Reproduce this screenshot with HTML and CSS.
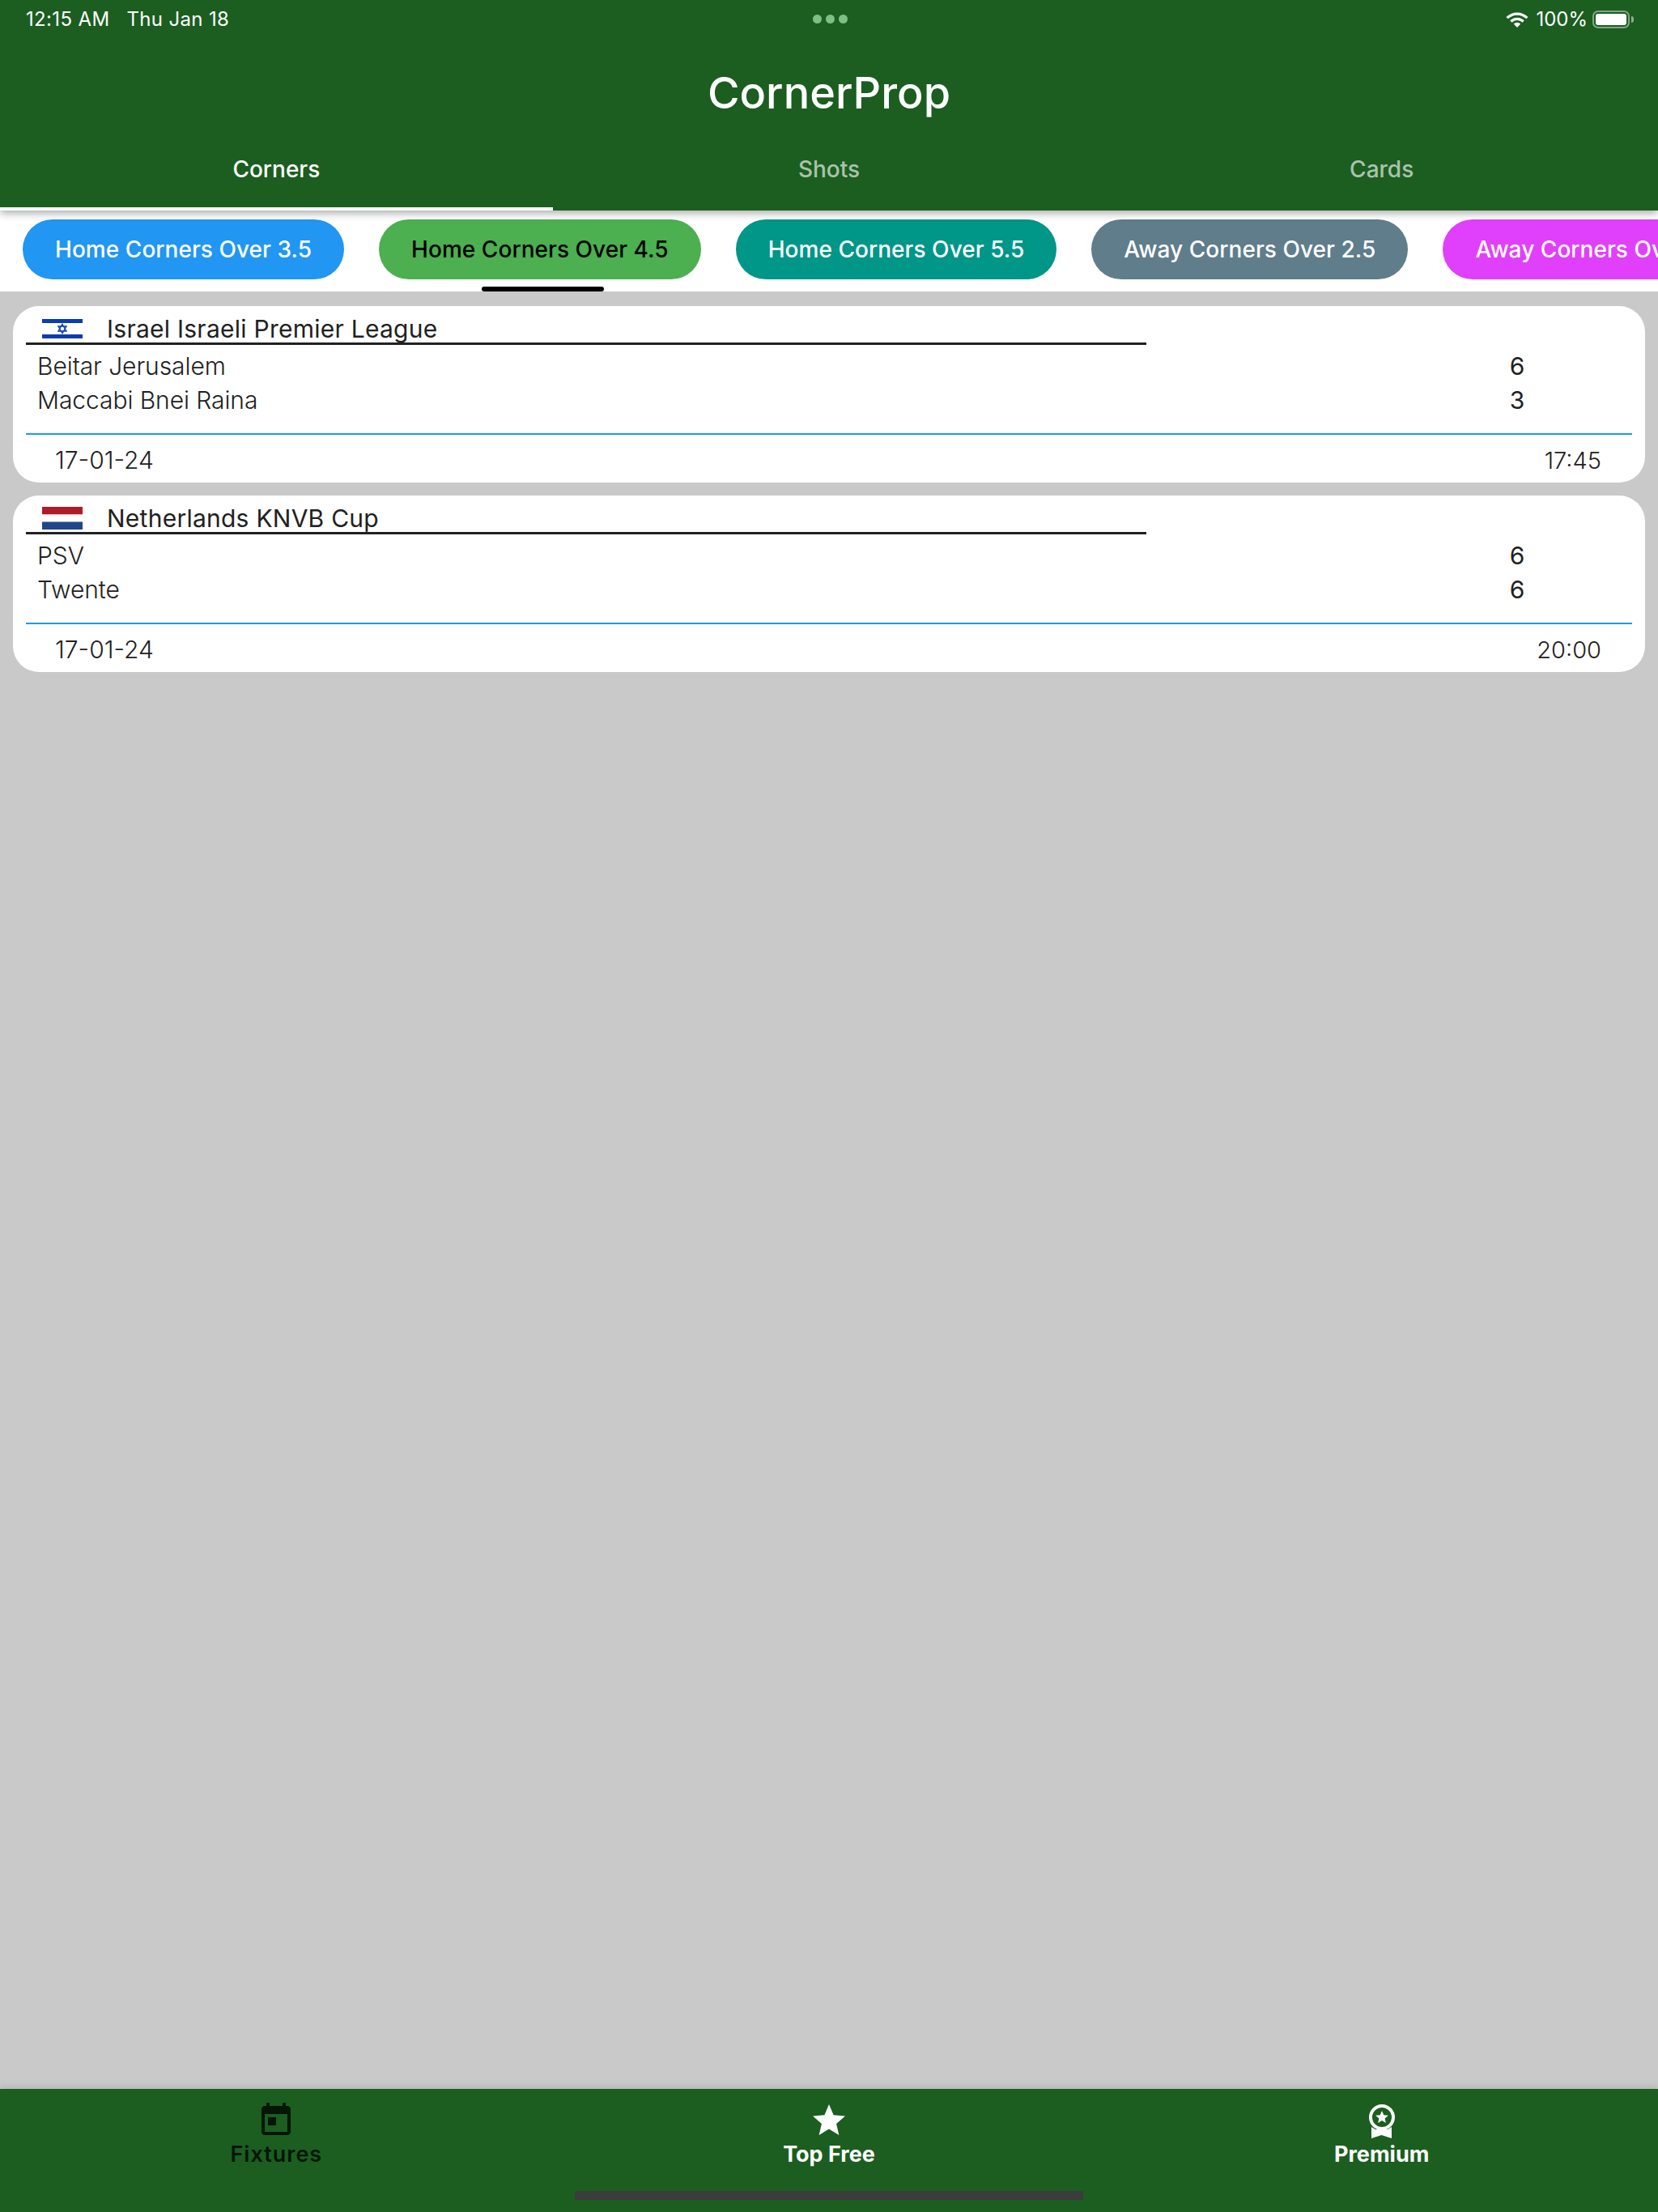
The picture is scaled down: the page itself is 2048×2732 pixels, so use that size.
FILE: index.html
```html
<!DOCTYPE html>
<html lang="en">
<head>
<meta charset="utf-8">
<title>CornerProp</title>
<link rel="stylesheet" href="styles.css">
</head>
<body>
<div class="app">
  <header class="appbar">
    <div class="status">
      <div class="status-left"><span>12:15 AM</span><span>Thu Jan 18</span></div>
      <div class="dots"><i></i><i></i><i></i></div>
      <div class="status-right">
        <svg class="wifi" viewBox="0 0 28 19" width="28" height="19"><path d="M1.6 7.2a17.5 17.5 0 0 1 24.8 0" fill="none" stroke="#fff" stroke-width="3.2"/><path d="M6.4 11.6a10.8 10.8 0 0 1 15.2 0" fill="none" stroke="#fff" stroke-width="3.2"/><path d="M9.8 14.4a6 6 0 0 1 8.4 0L14 19z" fill="#fff"/></svg>
        <span class="pct">100%</span>
        <div class="battery"><div class="battery-fill"></div></div>
        <div class="battery-nub"></div>
      </div>
    </div>
    <h1 class="title">CornerProp</h1>
    <nav class="tabs">
      <div class="tab tab-active">Corners</div>
      <div class="tab">Shots</div>
      <div class="tab">Cards</div>
    </nav>
  </header>

  <div class="chips">
    <div class="chip chip-blue">Home Corners Over 3.5</div>
    <div class="chip chip-green">Home Corners Over 4.5<span class="chip-mark"></span></div>
    <div class="chip chip-teal">Home Corners Over 5.5</div>
    <div class="chip chip-slate">Away Corners Over 2.5</div>
    <div class="chip chip-pink">Away Corners Over 3.5</div>
  </div>

  <main class="list">
    <article class="card">
      <div class="league">
        <svg class="flag flag-il" viewBox="0 0 50 24" width="50" height="24"><rect width="50" height="24" fill="#fff"/><rect width="50" height="5" fill="#0a3cb4"/><rect y="19" width="50" height="5" fill="#0a3cb4"/><path d="M25 6.5l5 8.5H20zM25 17.5l-5-8.500h10z" fill="none" stroke="#0a3cb4" stroke-width="1.400"/></svg>
        <span class="league-name">Israel Israeli Premier League</span>
      </div>
      <div class="teams">
        <div class="team"><span class="team-name">Beitar Jerusalem</span><span class="score">6</span></div>
        <div class="team"><span class="team-name">Maccabi Bnei Raina</span><span class="score">3</span></div>
      </div>
      <div class="meta"><span>17-01-24</span><span class="meta-time">17:45</span></div>
    </article>
    <article class="card">
      <div class="league">
        <svg class="flag flag-nl" viewBox="0 0 50 28" width="50" height="28"><rect width="50" height="9.500" fill="#ae1c28"/><rect y="9.500" width="50" height="9" fill="#fff"/><rect y="18.500" width="50" height="9.500" fill="#21468b"/></svg>
        <span class="league-name">Netherlands KNVB Cup</span>
      </div>
      <div class="teams">
        <div class="team"><span class="team-name">PSV</span><span class="score">6</span></div>
        <div class="team"><span class="team-name">Twente</span><span class="score">6</span></div>
      </div>
      <div class="meta"><span>17-01-24</span><span class="meta-time">20:00</span></div>
    </article>
  </main>

  <footer class="bottom">
    <div class="nav-item nav-dark">
      <svg viewBox="0 0 24 24" width="48" height="48"><path fill="currentColor" d="M19 3h-1V1h-2v2H8V1H6v2H5c-1.110 0-1.990.9-1.990 2L3 19c0 1.100.89 2 2 2h14c1.100 0 2-.9 2-2V5c0-1.100-.9-2-2-2zm0 16H5V8h14v11zM7 10h5v5H7z"/></svg>
      <span>Fixtures</span>
    </div>
    <div class="nav-item">
      <svg viewBox="0 0 24 24" width="48" height="48"><path fill="currentColor" d="M12 17.270L18.180 21l-1.640-7.030L22 9.240l-7.190-.61L12 2 9.190 8.630 2 9.240l5.460 4.730L5.820 21z"/></svg>
      <span>Top Free</span>
    </div>
    <div class="nav-item">
      <svg viewBox="0 0 48 48" width="48" height="48"><circle cx="24" cy="20" r="14" fill="none" stroke="currentColor" stroke-width="4"/><path fill="currentColor" d="M11 32v14l12.500-4L36 46V32l-5 3H16zM24 12l2.300 5.200 5.600.5-4.300 3.700 1.300 5.500-4.900-2.900-4.900 2.900 1.300-5.500-4.300-3.700 5.600-.5z"/></svg>
      <span>Premium</span>
    </div>
    <div class="home-bar"></div>
  </footer>
</div>
</body>
</html>
```
FILE: styles.css
```css
* { box-sizing: border-box; }
html, body { margin: 0; padding: 0; }
body { font-family: "Inter", "Liberation Sans", sans-serif; }

.app {
  width: 2048px;
  height: 2732px;
  display: flex;
  flex-direction: column;
  background: #c9c9c9;
  overflow: hidden;
}

.appbar {
  position: relative;
  z-index: 2;
  height: 260px;
  background: #1b5e20;
  color: #fff;
  box-shadow: 0 3px 10px rgba(0, 0, 0, 0.35);
  display: flex;
  flex-direction: column;
}

.status {
  height: 46px;
  padding: 1px 30px 0 32px;
  display: grid;
  grid-template-columns: 1fr auto 1fr;
  align-items: center;
  font-size: 24px;
  line-height: 46px;
  letter-spacing: 0.35px;
}
.status-left { display: flex; gap: 21px; }
.status-right { display: flex; justify-content: flex-end; align-items: center; }
.dots { display: flex; gap: 5px; margin-top: -1px; }
.dots i { width: 11px; height: 11px; border-radius: 50%; background: #7fbf85; }
.wifi { margin-right: 9px; }
.pct { margin-right: 6px; letter-spacing: 0; }
.battery {
  width: 46px;
  height: 22px;
  border: 2px solid rgba(255, 255, 255, 0.45);
  border-radius: 7px;
  padding: 2px;
}
.battery-fill { width: 100%; height: 100%; background: #fff; border-radius: 3px; }
.battery-nub {
  width: 3px;
  height: 8px;
  margin-left: 2px;
  background: rgba(255, 255, 255, 0.5);
  border-radius: 0 3px 3px 0;
}

.title {
  margin: 0;
  height: 136px;
  padding-top: 36px;
  text-align: center;
  font-size: 54px;
  line-height: 66px;
  font-weight: 500;
}

.tabs { flex: 1; display: flex; }
.tab {
  flex: 1;
  text-align: center;
  font-size: 28px;
  line-height: 36px;
  font-weight: 500;
  padding-top: 9px;
  color: rgba(255, 255, 255, 0.65);
  border-bottom: 4px solid transparent;
}
.tab-active { color: #fff; border-bottom-color: #fff; }

.chips {
  height: 100px;
  flex: none;
  background: #fff;
  padding-top: 11px;
  display: flex;
  gap: 43px;
  padding-left: 28px;
  overflow: hidden;
}
.chip {
  position: relative;
  flex: none;
  height: 74px;
  padding: 0 40px;
  border-radius: 37px;
  font-size: 28px;
  letter-spacing: 0.05px;
  line-height: 74px;
  font-weight: 500;
  color: #fff;
  white-space: nowrap;
}
.chip-blue { background: #2196f3; }
.chip-green { background: #4caf50; color: #000; }
.chip-teal { background: #009688; }
.chip-slate { background: #607d8b; }
.chip-pink { background: #e040fb; }
.chip-mark {
  position: absolute;
  left: 127px;
  top: 83px;
  width: 151px;
  height: 6px;
  border-radius: 3px;
  background: #000;
}

.list {
  flex: 1;
  padding: 18px 16px 0 16px;
  display: flex;
  flex-direction: column;
  gap: 16px;
}
.card {
  height: 218px;
  background: #fff;
  border-radius: 32px;
  padding: 0 16px;
  color: #212121;
}
.league {
  height: 48px;
  width: 1384px;
  border-bottom: 3px solid #212121;
  padding-left: 20px;
  display: flex;
  align-items: flex-end;
  gap: 30px;
}
.flag { flex: none; }
.flag-il { margin-bottom: 5px; }
.flag-nl { margin-bottom: 3px; }
.league-name {
  font-size: 30px;
  letter-spacing: 0.25px;
  line-height: 40px;
  font-weight: 400;
  position: relative;
  top: 3px;
}

.teams {
  padding: 5px 0 0 14px;
  height: 111px;
  border-bottom: 2px solid #2196f3;
}
.team {
  display: flex;
  font-size: 30px;
  letter-spacing: -0.08px;
  line-height: 42px;
  font-weight: 300;
}
.team-name { width: 1813px; }
.score { width: 30px; text-align: center; font-weight: 400; }

.meta {
  display: flex;
  justify-content: space-between;
  align-items: baseline;
  padding: 13px 38px 0 36px;
  font-size: 30px;
  line-height: 36px;
  font-weight: 300;
}
.meta-time { font-size: 29px; }

.bottom {
  position: relative;
  height: 152px;
  flex: none;
  background: #1b5e20;
  color: #fff;
  box-shadow: 0 -2px 8px rgba(0, 0, 0, 0.12);
  display: flex;
}
.nav-item {
  flex: 1;
  padding-top: 15px;
  display: flex;
  flex-direction: column;
  align-items: center;
  font-size: 27px;
  line-height: 36px;
  font-weight: 700;
}
.nav-item svg { display: block; margin-bottom: 0; }
.nav-dark { color: #051506; font-weight: 600; letter-spacing: 1px; }
.home-bar {
  position: absolute;
  left: 710px;
  top: 126px;
  width: 628px;
  height: 11px;
  background: #3c3c3c;
}
```
